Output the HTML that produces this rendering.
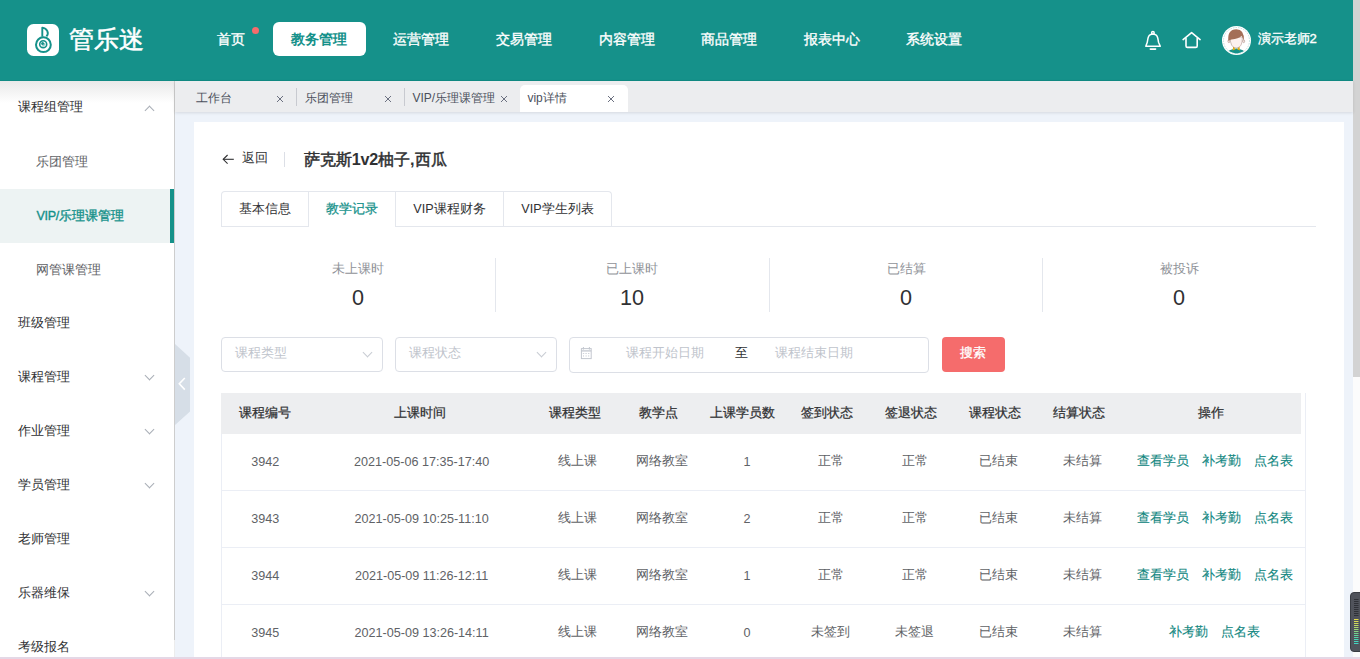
<!DOCTYPE html>
<html><head><meta charset="utf-8">
<style>
*{box-sizing:border-box;margin:0;padding:0}
html,body{width:1360px;height:659px;overflow:hidden;background:#eef3fa;font-family:"Liberation Sans",sans-serif;color:#303133}
.a{position:absolute;white-space:nowrap}
.t{position:absolute;white-space:nowrap;line-height:20px;height:20px}
#hdr{position:absolute;left:0;top:0;width:1353px;height:81px;background:#15918a;border-bottom:1px solid #118b84}
.nav{position:absolute;top:29px;line-height:20px;font-size:14.4px;color:#fff;-webkit-text-stroke:0.35px #fff}
#side{position:absolute;left:0;top:81px;width:175px;height:578px;background:#fff;border-right:1px solid #ececec}
.si{position:absolute;font-size:12.6px;line-height:20px;height:20px;color:#303133}
.sub{color:#606266}
.chev{position:absolute;width:7px;height:7px;border-left:1px solid #a9aeb6;border-bottom:1px solid #a9aeb6}
#tabs{position:absolute;left:175px;top:81px;width:1178px;height:31px;background:#ecedef;box-shadow:0 1px 3px rgba(0,0,0,.11)}
.tg{position:absolute;font-size:12px;line-height:20px;color:#4b505c}
.x{position:absolute;font-size:13px;line-height:14px;color:#6b7080}
.sep{position:absolute;width:1px;background:#c8cad0}
#card{position:absolute;left:194px;top:122px;width:1150px;height:537px;background:#fff}
.tab{position:absolute;top:191.5px;height:35px;font-size:12.6px;line-height:34px;color:#303133;text-align:center;border-right:1px solid #e4e7ed}
.lbl{position:absolute;font-size:12.6px;line-height:20px;color:#909399;text-align:center}
.num{position:absolute;font-size:21.6px;line-height:24px;color:#303133;text-align:center}
.vd{position:absolute;top:258px;width:1px;height:54px;background:#e4e7ed}
.sel{position:absolute;top:336.5px;height:35.5px;border:1px solid #dcdfe6;border-radius:4px;background:#fff}
.ph{position:absolute;font-size:12.6px;line-height:20px;color:#c0c4cc}
.th{position:absolute;top:402.6px;font-size:12.6px;line-height:20px;-webkit-text-stroke:0.25px #303133;color:#303133;text-align:center;width:120px;margin-left:-60px}
.td{position:absolute;font-size:12.6px;line-height:20px;color:#606266;text-align:center;width:160px;margin-left:-80px}
.lk{position:absolute;font-size:12.6px;line-height:20px;color:#12877f;-webkit-text-stroke:0.12px #12877f}
.hl{position:absolute;left:221px;width:1084px;height:1px;background:#ebeef5}
</style></head><body>

<!-- header -->
<div id="hdr">
  <svg class="a" style="left:27px;top:24px" width="32" height="32" viewBox="0 0 32 32">
    <rect x="0" y="0" width="32" height="32" rx="6.5" fill="#fff"/>
    <path d="M15.3 12.8 V3.6 C20.3 4.2 22.4 9.4 19.4 12.3" fill="none" stroke="#15918a" stroke-width="1.9" stroke-linejoin="round"/>
    <circle cx="16.4" cy="20.7" r="7.4" fill="none" stroke="#15918a" stroke-width="2"/>
    <circle cx="16.2" cy="20.3" r="3.5" fill="none" stroke="#15918a" stroke-width="1.6"/>
    <circle cx="15.6" cy="19.6" r="1.5" fill="#15918a"/>
    <path d="M17.6 19.4 A1.9 1.9 0 0 1 15.2 21.9" fill="none" stroke="#15918a" stroke-width="0.7"/>
  </svg>
  <div class="a" style="left:69px;top:22px;font-size:25px;line-height:34px;color:#fff;font-weight:normal;letter-spacing:0px;-webkit-text-stroke:0.5px #fff">管乐迷</div>

  <div class="nav" style="left:217px">首页</div>
  <div class="a" style="left:251.8px;top:27px;width:7px;height:7px;border-radius:50%;background:#f56c6c"></div>
  <div class="a" style="left:273px;top:22px;width:93px;height:34px;background:#fff;border-radius:6px"></div>
  <div class="nav" style="left:291px;color:#15918a;font-weight:bold;-webkit-text-stroke:0">教务管理</div>
  <div class="nav" style="left:393px">运营管理</div>
  <div class="nav" style="left:496px">交易管理</div>
  <div class="nav" style="left:598.5px">内容管理</div>
  <div class="nav" style="left:701px">商品管理</div>
  <div class="nav" style="left:803.7px">报表中心</div>
  <div class="nav" style="left:906.3px">系统设置</div>

  <svg class="a" style="left:1140px;top:26px" width="26" height="28" viewBox="0 0 26 28">
    <g fill="none" stroke="#fff" stroke-width="1.5" stroke-linejoin="round" stroke-linecap="round">
      <circle cx="12.9" cy="6.9" r="1.3"/>
      <path d="M5.8 20.3 H20.3 L18.6 16.5 C17.9 14.5 18.3 9.6 15.6 8.7 C14.5 8.2 11.3 8.2 10.2 8.7 C7.5 9.6 7.9 14.5 7.2 16.5 Z"/>
      <path d="M10.3 23.1 H15.6" stroke-width="1.6"/>
    </g>
  </svg>
  <svg class="a" style="left:1178px;top:26px" width="28" height="28" viewBox="0 0 28 28">
    <g fill="none" stroke="#fff" stroke-width="1.6" stroke-linejoin="round" stroke-linecap="round">
      <path d="M5.1 13.6 L13.6 6.6 L22.1 13.6"/>
      <path d="M8 12.6 V19.9 Q8 21.4 9.5 21.4 H17.7 Q19.2 21.4 19.2 19.9 V12.6"/>
    </g>
  </svg>
  <svg class="a" style="left:1222px;top:25.8px" width="29" height="29" viewBox="0 0 29 29">
    <defs><clipPath id="cc"><circle cx="14.5" cy="14.5" r="12.9"/></clipPath></defs>
    <circle cx="14.5" cy="14.5" r="14.5" fill="#fff"/>
    <circle cx="14.5" cy="14.5" r="13" fill="none" stroke="#a9d6d2" stroke-width="0.7" stroke-dasharray="1.6 1"/>
    <g clip-path="url(#cc)">
      <path d="M4.5 29 Q5 23.5 14.3 22.6 Q23.5 23.5 24 29 Z" fill="#15918a"/>
      <path d="M11.2 20.2 L10.6 24.6 L13.6 23.3 Z M17.4 20.2 L18 24.6 L15 23.3 Z" fill="#e2ae17"/>
      <ellipse cx="6.9" cy="15.2" rx="1" ry="1.5" fill="#fbe9e6" stroke="#8a6a60" stroke-width="0.4"/>
      <ellipse cx="21.7" cy="15.2" rx="1" ry="1.5" fill="#fbe9e6" stroke="#8a6a60" stroke-width="0.4"/>
      <path d="M8.2 11 Q8 21.8 14.3 22 Q20.6 21.8 20.4 11 Z" fill="#fdf1ef" stroke="#8a6a60" stroke-width="0.4"/>
      <path d="M6.3 14.8 Q5.3 3.4 14.3 3.2 Q22.6 3.4 21.9 14.6 Q20.6 11.5 19.6 9.8 Q16.5 13 9.5 13.5 Q7.8 13.8 6.3 14.8 Z" fill="#a46f58"/>
    </g>
  </svg>
  <div class="nav" style="left:1257.6px;font-size:13.1px">演示老师2</div>
</div>

<!-- scrollbar -->
<div class="a" style="left:1353px;top:0;width:7px;height:659px;background:#fcfcfc"></div>
<div class="a" style="left:1353px;top:0;width:7px;height:377px;background:#d3d3d3"></div>

<!-- sidebar -->
<div id="side">
  <div class="a" style="left:0;top:0;width:174px;height:22px;background:linear-gradient(#e9e9e9,#fff)"></div>
  <div class="a" style="left:174px;top:0;width:1px;height:559px;background:#cdcdcd"></div>
</div>
<div class="a" style="left:0;top:189px;width:174px;height:54px;background:#edf3f3"></div>
<div class="a" style="left:170px;top:189px;width:4px;height:54px;background:#15918a"></div>
<div class="si" style="left:18.4px;top:97px">课程组管理</div>
<div class="chev" style="left:145.6px;top:106.8px;transform:rotate(135deg);border-color:#a9aeb6"></div>
<div class="si sub" style="left:36px;top:152.4px">乐团管理</div>
<div class="si" style="left:36.4px;top:206px;color:#15918a;-webkit-text-stroke:0.35px #15918a"><span style="letter-spacing:-0.3px">VIP/</span>乐理课管理</div>
<div class="si sub" style="left:36px;top:260.3px">网管课管理</div>
<div class="si" style="left:18.4px;top:312.8px">班级管理</div>
<div class="si" style="left:18.4px;top:367.2px">课程管理</div>
<div class="chev" style="left:146px;top:372px;transform:rotate(-45deg)"></div>
<div class="si" style="left:18.4px;top:421.2px">作业管理</div>
<div class="chev" style="left:146px;top:426px;transform:rotate(-45deg)"></div>
<div class="si" style="left:18.4px;top:475.2px">学员管理</div>
<div class="chev" style="left:146px;top:480px;transform:rotate(-45deg)"></div>
<div class="si" style="left:18.4px;top:529px">老师管理</div>
<div class="si" style="left:18.4px;top:583.3px">乐器维保</div>
<div class="chev" style="left:146px;top:588px;transform:rotate(-45deg)"></div>
<div class="si" style="left:18.4px;top:637px">考级报名</div>

<!-- collapse handle -->
<svg class="a" style="left:175px;top:343px" width="16" height="84" viewBox="0 0 16 84">
  <path d="M0 1 L15 14.7 V68.5 L0 82 Z" fill="#d6dee7"/>
  <path d="M9.8 35 L4.3 40.8 L9.8 46.6" fill="none" stroke="#fff" stroke-width="1.6"/>
</svg>

<!-- tags bar -->
<div id="tabs"></div>
<div class="tg" style="left:196px;top:87.5px">工作台</div>
<svg class="a" style="left:276.0px;top:95px" width="8" height="8" viewBox="0 0 8 8"><path d="M1 1 L7 7 M7 1 L1 7" stroke="#6b7080" stroke-width="1"/></svg>
<div class="sep" style="left:296px;top:88px;height:17.5px"></div>
<div class="tg" style="left:304.5px;top:87.5px">乐团管理</div>
<svg class="a" style="left:383.5px;top:95px" width="8" height="8" viewBox="0 0 8 8"><path d="M1 1 L7 7 M7 1 L1 7" stroke="#6b7080" stroke-width="1"/></svg>
<div class="sep" style="left:404px;top:88px;height:17.5px"></div>
<div class="tg" style="left:412.4px;top:87.5px">VIP/乐理课管理</div>
<svg class="a" style="left:500.1px;top:95px" width="8" height="8" viewBox="0 0 8 8"><path d="M1 1 L7 7 M7 1 L1 7" stroke="#6b7080" stroke-width="1"/></svg>
<div class="a" style="left:520px;top:85px;width:108px;height:27px;background:#fff;border-radius:5px 5px 0 0"></div>
<div class="tg" style="left:527.4px;top:87.5px">vip详情</div>
<svg class="a" style="left:606.9px;top:95px" width="8" height="8" viewBox="0 0 8 8"><path d="M1 1 L7 7 M7 1 L1 7" stroke="#6b7080" stroke-width="1"/></svg>

<!-- card -->
<div id="card"></div>
<svg class="a" style="left:222px;top:154px" width="13" height="11" viewBox="0 0 13 11"><g fill="none" stroke="#303133" stroke-width="1.1"><path d="M1.2 5.3 H11.8"/><path d="M5.6 1 L1.2 5.3 L5.6 9.6"/></g></svg>
<div class="t" style="left:242px;top:148px;font-size:12.6px;color:#303133">返回</div>
<div class="a" style="left:284px;top:152px;width:1px;height:15px;background:#dcdfe6"></div>
<div class="t" style="left:303.7px;top:149.3px;font-size:16.2px;color:#303133;-webkit-text-stroke:0.5px #303133">萨克斯<span style="-webkit-text-stroke:0;font-weight:bold;letter-spacing:-0.2px">1v2</span>柚子<span style="-webkit-text-stroke:0;font-weight:bold">,</span>西瓜</div>

<!-- card tabs -->
<div class="a" style="left:221px;top:190.5px;width:391px;height:36.5px;border:1px solid #e4e7ed;border-bottom:none;border-radius:4px 4px 0 0"></div>
<div class="a" style="left:221px;top:226px;width:1095px;height:1px;background:#e4e7ed"></div>
<div class="tab" style="left:222px;width:87px">基本信息</div>
<div class="tab" style="left:309px;width:87px;color:#15918a;-webkit-text-stroke:0.25px #15918a">教学记录</div>
<div class="a" style="left:309px;top:226px;width:86px;height:1px;background:#fff"></div>
<div class="tab" style="left:396px;width:108px">VIP课程财务</div>
<div class="tab" style="left:504px;width:107px;border-right:none">VIP学生列表</div>

<!-- stats -->
<div class="lbl" style="left:221px;top:258.6px;width:274px">未上课时</div>
<div class="num" style="left:221px;top:285.7px;width:274px">0</div>
<div class="vd" style="left:494.5px"></div>
<div class="lbl" style="left:495px;top:258.6px;width:274px">已上课时</div>
<div class="num" style="left:495px;top:285.7px;width:274px">10</div>
<div class="vd" style="left:768.5px"></div>
<div class="lbl" style="left:769px;top:258.6px;width:274px">已结算</div>
<div class="num" style="left:769px;top:285.7px;width:274px">0</div>
<div class="vd" style="left:1042.3px"></div>
<div class="lbl" style="left:1042px;top:258.6px;width:274px">被投诉</div>
<div class="num" style="left:1042px;top:285.7px;width:274px">0</div>

<!-- filters -->
<div class="sel" style="left:221px;width:162px"></div>
<div class="ph" style="left:235.3px;top:343px">课程类型</div>
<div class="chev" style="left:363.5px;top:348.6px;transform:rotate(-45deg);border-color:#c8ccd3"></div>
<div class="sel" style="left:395.4px;width:161.5px"></div>
<div class="ph" style="left:409.4px;top:343px">课程状态</div>
<div class="chev" style="left:537.5px;top:348.6px;transform:rotate(-45deg);border-color:#c8ccd3"></div>
<div class="sel" style="left:569.3px;width:359.5px;top:337px"></div>
<svg class="a" style="left:580px;top:346px" width="13" height="14" viewBox="0 0 13 14">
  <g fill="none" stroke="#c3c7cf" stroke-width="1">
    <rect x="1.4" y="2.6" width="9.8" height="10"/>
    <path d="M1.4 4.9 H11.2" stroke-width="1.3"/>
    <path d="M3.4 1 V3.6 M9.4 1 V3.6"/>
    <path d="M2.8 7.5 H4.2 M5.4 7.5 H6.8 M8 7.5 H9.4 M3.5 9.3 V10.6 M6.1 9.3 V10.6 M8.7 9.3 V10.6" stroke="#d0d3da"/>
  </g>
</svg>
<div class="ph" style="left:626.2px;top:343px">课程开始日期</div>
<div class="t" style="left:734.5px;top:343px;font-size:12.6px;color:#303133">至</div>
<div class="ph" style="left:775.4px;top:343px">课程结束日期</div>
<div class="a" style="left:942px;top:337px;width:63px;height:35px;background:#f56c6c;border-radius:4px"></div>
<div class="t" style="left:960.3px;top:343px;font-size:12.6px;color:#fff;-webkit-text-stroke:0.3px #fff">搜索</div>

<!-- table -->
<div class="a" style="left:221px;top:393px;width:1080px;height:41px;background:#edeef0"></div>
<div class="a" style="left:221px;top:434px;width:1px;height:225px;background:#ebeef5"></div>
<div class="a" style="left:1305px;top:393px;width:1px;height:266px;background:#ebeef5"></div>
<div class="hl" style="top:490px"></div>
<div class="hl" style="top:547px"></div>
<div class="hl" style="top:604px"></div>

<div class="th" style="left:264.6px">课程编号</div>
<div class="th" style="left:420px">上课时间</div>
<div class="th" style="left:574.6px">课程类型</div>
<div class="th" style="left:658.5px">教学点</div>
<div class="th" style="left:742.6px">上课学员数</div>
<div class="th" style="left:826.6px">签到状态</div>
<div class="th" style="left:910.8px">签退状态</div>
<div class="th" style="left:994.8px">课程状态</div>
<div class="th" style="left:1078.7px">结算状态</div>
<div class="th" style="left:1210.9px">操作</div>

<!-- rows -->
<div id="rows"></div>
<div class="td" style="left:265.3px;top:452.0px">3942</div>
<div class="td" style="left:421.6px;top:452.0px">2021-05-06 17:35-17:40</div>
<div class="td" style="left:577px;top:451.2px">线上课</div>
<div class="td" style="left:662.4px;top:451.2px">网络教室</div>
<div class="td" style="left:747px;top:452.0px">1</div>
<div class="td" style="left:831px;top:451.2px">正常</div>
<div class="td" style="left:914.6px;top:451.2px">正常</div>
<div class="td" style="left:998.7px;top:451.2px">已结束</div>
<div class="td" style="left:1082.6px;top:451.2px">未结算</div>
<div class="lk" style="left:1137px;top:451.2px">查看学员</div>
<div class="lk" style="left:1202px;top:451.2px">补考勤</div>
<div class="lk" style="left:1253.8px;top:451.2px">点名表</div>

<div class="td" style="left:265.3px;top:508.8px">3943</div>
<div class="td" style="left:421.6px;top:508.8px">2021-05-09 10:25-11:10</div>
<div class="td" style="left:577px;top:508.0px">线上课</div>
<div class="td" style="left:662.4px;top:508.0px">网络教室</div>
<div class="td" style="left:747px;top:508.8px">2</div>
<div class="td" style="left:831px;top:508.0px">正常</div>
<div class="td" style="left:914.6px;top:508.0px">正常</div>
<div class="td" style="left:998.7px;top:508.0px">已结束</div>
<div class="td" style="left:1082.6px;top:508.0px">未结算</div>
<div class="lk" style="left:1137px;top:508.0px">查看学员</div>
<div class="lk" style="left:1202px;top:508.0px">补考勤</div>
<div class="lk" style="left:1253.8px;top:508.0px">点名表</div>

<div class="td" style="left:265.3px;top:565.7px">3944</div>
<div class="td" style="left:421.6px;top:565.7px">2021-05-09 11:26-12:11</div>
<div class="td" style="left:577px;top:564.9px">线上课</div>
<div class="td" style="left:662.4px;top:564.9px">网络教室</div>
<div class="td" style="left:747px;top:565.7px">1</div>
<div class="td" style="left:831px;top:564.9px">正常</div>
<div class="td" style="left:914.6px;top:564.9px">正常</div>
<div class="td" style="left:998.7px;top:564.9px">已结束</div>
<div class="td" style="left:1082.6px;top:564.9px">未结算</div>
<div class="lk" style="left:1137px;top:564.9px">查看学员</div>
<div class="lk" style="left:1202px;top:564.9px">补考勤</div>
<div class="lk" style="left:1253.8px;top:564.9px">点名表</div>

<div class="td" style="left:265.3px;top:622.7px">3945</div>
<div class="td" style="left:421.6px;top:622.7px">2021-05-09 13:26-14:11</div>
<div class="td" style="left:577px;top:621.9px">线上课</div>
<div class="td" style="left:662.4px;top:621.9px">网络教室</div>
<div class="td" style="left:747px;top:622.7px">0</div>
<div class="td" style="left:830px;top:621.9px">未签到</div>
<div class="td" style="left:914px;top:621.9px">未签退</div>
<div class="td" style="left:998.7px;top:621.9px">已结束</div>
<div class="td" style="left:1082.6px;top:621.9px">未结算</div>
<div class="lk" style="left:1169.4px;top:621.9px">补考勤</div>
<div class="lk" style="left:1221px;top:621.9px">点名表</div>

<!-- bottom widget + strip -->
<svg class="a" style="left:1349.5px;top:591.5px" width="11" height="60" viewBox="0 0 11 60">
  <rect x="0.5" y="0.5" width="13" height="59" rx="3.5" fill="#50535b" stroke="#3a3d43" stroke-width="1"/>
  <g stroke-width="1"><path d="M4 7.5 H8.5" stroke="#2f3137"/><path d="M4 9.5 H8.5" stroke="#2f3137"/><path d="M4 11.5 H8.5" stroke="#2f3137"/><path d="M4 13.5 H8.5" stroke="#2f3137"/><path d="M4 15.5 H8.5" stroke="#2f3137"/><path d="M4 17.5 H8.5" stroke="#2f3137"/><path d="M4 19.5 H8.5" stroke="#2f3137"/><path d="M4 21.5 H8.5" stroke="#2f3137"/><path d="M4 23.5 H8.5" stroke="#2f3137"/><path d="M4 27.5 H8.5" stroke="#e3dc4a"/><path d="M4 29.5 H8.5" stroke="#dcdc52"/><path d="M4 31.5 H8.5" stroke="#d0db5a"/><path d="M4 33.5 H8.5" stroke="#bfd964"/><path d="M4 35.5 H8.5" stroke="#aed86d"/><path d="M4 37.5 H8.5" stroke="#9bd777"/><path d="M4 39.5 H8.5" stroke="#86d682"/><path d="M4 41.5 H8.5" stroke="#72d58e"/><path d="M4 43.5 H8.5" stroke="#62d59b"/><path d="M4 45.5 H8.5" stroke="#55d5a7"/><path d="M4 47.5 H8.5" stroke="#4bd5b2"/><path d="M4 49.5 H8.5" stroke="#45d5bb"/><path d="M4 51.5 H8.5" stroke="#41d5c2"/></g>
</svg>
<div class="a" style="left:0;top:657px;width:1360px;height:2px;background:#e4d8e6"></div>
</body></html>
